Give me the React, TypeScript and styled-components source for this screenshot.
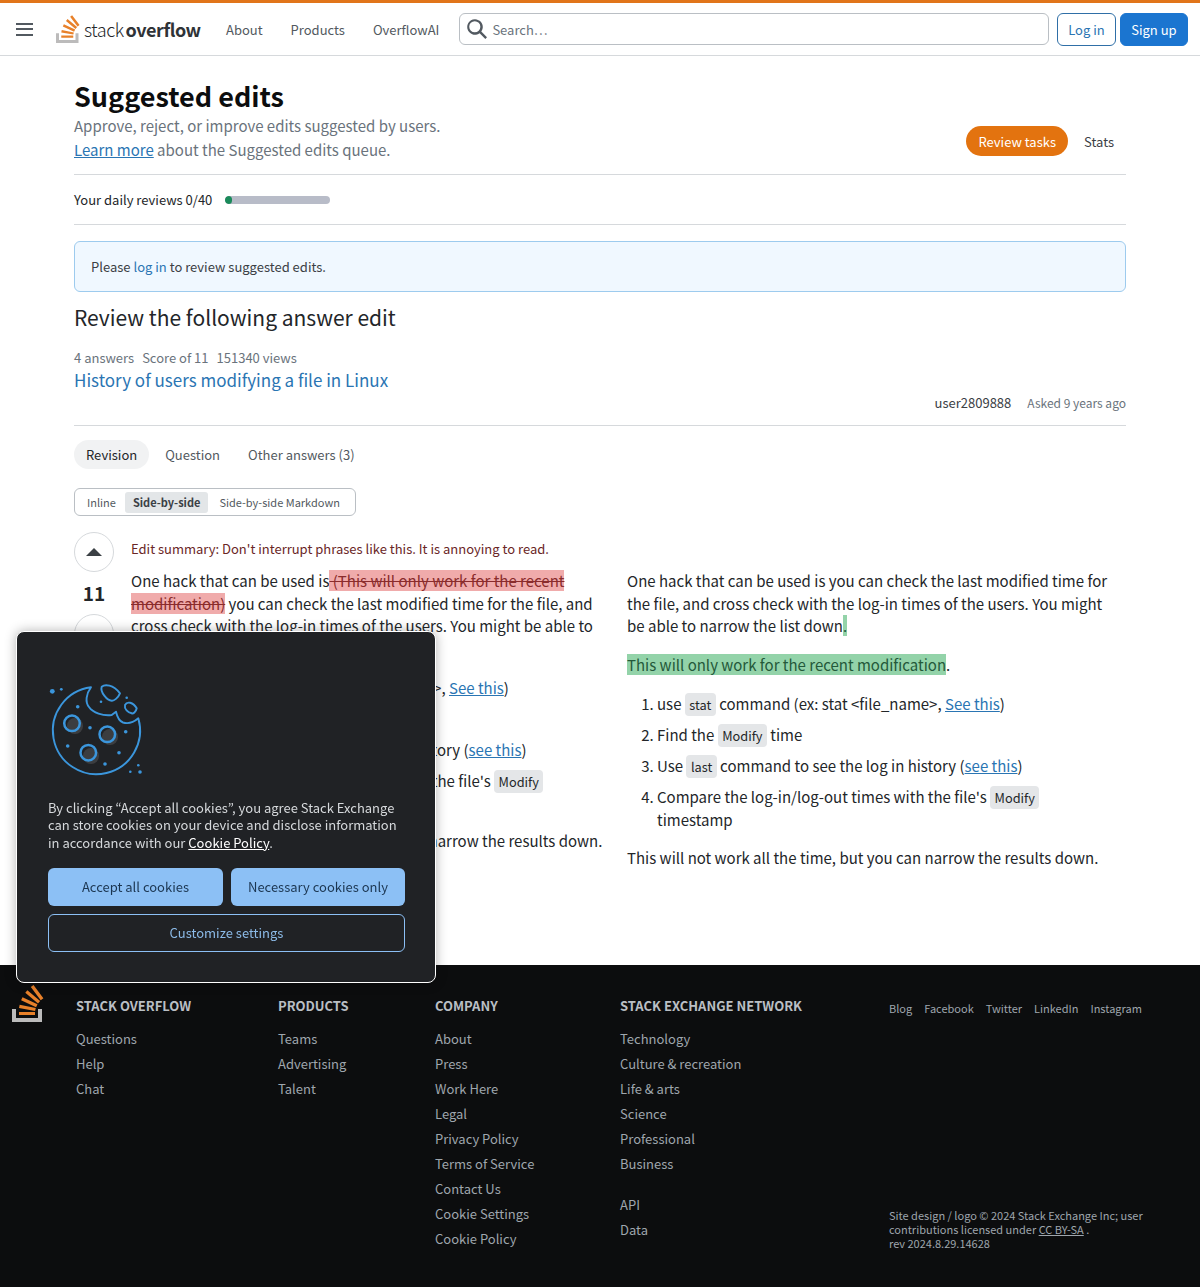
import React from 'react';
import styled, { createGlobalStyle } from 'styled-components';

const GlobalStyle = createGlobalStyle`
  html, body { margin: 0; padding: 0; background: #fff; }
  body {
    font-family: "Noto Sans CJK JP", "Noto Sans", sans-serif;
    color: #232629;
    font-size: 13px;
  }
  * { box-sizing: border-box; }
  svg { flex: none; display: block; }
`;

const SoIcon: React.FC<{ width: number; height: number }> = ({ width, height }) => (
  <svg width={width} height={height} viewBox="0 0 32 37" aria-hidden="true">
    <path d="M26 33v-9h4v13H0V24h4v9h22Z" fill="#bcbbbb" />
    <path
      d="m21.5 0-2.7 2 9.9 13.3 2.7-2L21.5 0ZM26 18.4 13.3 7.8l2.1-2.5 12.7 10.6-2.1 2.5ZM9.1 15.2l15 7 1.4-3-15-7-1.4 3Zm14 10.79.68-2.95-16.1-3.35L7 23l16.1 2.99ZM23 30H7v-3h16v3Z"
      fill="#e8812a"
    />
  </svg>
);

const CookieIcon: React.FC = () => (
  <svg width="100" height="100" viewBox="0 0 100 100" fill="none" aria-hidden="true">
    <g fill="#fff" opacity="0.12">
      <circle cx="27" cy="44" r="8" />
      <circle cx="62" cy="55" r="8" />
      <circle cx="43" cy="74" r="8" />
    </g>
    <g stroke="#3b96dc" strokeWidth="1.9" strokeLinejoin="round">
      <path d="M43 5.3C38 12 37 20 41 25C45 31 55 34 63.7 33L68 29.7C69 34 71 39 75 40.5C80 42 86 40 90.3 36.3A43.6 43.6 0 1 1 43 5.3Z" />
      <path d="M53.7 4.7C57 2 65 2.5 72 11.3C70 16 66 19 63.7 18.7C59 18.5 52 10 53.7 4.7Z" />
      <path d="M77 23C79 19 85 20 88.7 26.3C88 30 85 32 83.7 31.3C80 30.5 76 27 77 23Z" />
      <circle cx="24" cy="41.3" r="7.8" strokeWidth="2.5" />
      <circle cx="59.3" cy="52.3" r="7.8" strokeWidth="2.5" />
      <circle cx="40.3" cy="70.7" r="7.8" strokeWidth="2.5" />
    </g>
    <g fill="#3b96dc">
      <circle cx="4.3" cy="9.3" r="2.4" />
      <circle cx="13.3" cy="7.3" r="1.4" />
      <circle cx="29.7" cy="24.7" r="1.8" />
      <circle cx="42" cy="45.7" r="1.8" />
      <circle cx="77.7" cy="49.7" r="1.8" />
      <circle cx="19.7" cy="64" r="1.8" />
      <circle cx="71" cy="70.7" r="1.8" />
      <circle cx="57" cy="82" r="1.8" />
      <circle cx="78.7" cy="15.7" r="1.3" />
      <circle cx="53" cy="19.7" r="1.3" />
      <circle cx="90.3" cy="83.3" r="1.3" />
      <circle cx="82.3" cy="89.7" r="1.3" />
      <circle cx="92" cy="90" r="1.8" />
    </g>
  </svg>
);

const Header = styled.header`
  height: 56px;
  border-top: 3px solid #e1751a;
  border-bottom: 1px solid #d6d9dc;
  display: flex;
  align-items: center;
  padding: 0 12px 0 16px;
`;

const Burger = styled.span`
  width: 17px;
  height: 13px;
  margin-right: 23px;
  flex: none;
  border-top: 2px solid #525960;
  border-bottom: 2px solid #525960;
  position: relative;
  &::after {
    content: "";
    position: absolute;
    left: 0;
    right: 0;
    top: 3.5px;
    height: 2px;
    background: #525960;
  }
`;

const Logo = styled.a`
  display: flex;
  align-items: flex-end;
  width: 146px;
  margin-right: 24px;
  flex: none;
  gap: 4px;
`;

const Wordmark = styled.div`
  color: #232629;
  font-size: 18px;
  line-height: 24px;
  letter-spacing: -0.45px;
  margin-bottom: 2px;
  white-space: nowrap;
  span { font-weight: 300; }
  b { font-weight: 700; margin-left: 2px; color: #2f3337; }
`;

const Nav = styled.nav`
  display: flex;
  gap: 28px;
  margin-right: 20px;
`;

const NavLink = styled.a`
  color: #525960;
  font-size: 13px;
  white-space: nowrap;
`;

const Search = styled.div`
  flex: 1;
  height: 32px;
  margin-right: 8px;
  border: 1px solid #babfc4;
  border-radius: 6px;
  display: flex;
  align-items: center;
  padding-left: 7px;
  gap: 5px;
  color: #6a737c;
  font-size: 13px;
`;

const HeaderButton = styled.a<{ $primary?: boolean }>`
  height: 33px;
  display: flex;
  align-items: center;
  padding: 0 ${p => (p.$primary ? '10.4px' : '10px')};
  border-radius: 6px;
  font-size: 13px;
  margin-left: ${p => (p.$primary ? '4px' : '0')};
  background: ${p => (p.$primary ? '#1b75d0' : '#fff')};
  color: ${p => (p.$primary ? '#fff' : '#2a75b3')};
  border: 1px solid ${p => (p.$primary ? '#1b75d0' : '#2f6fa7')};
`;

const Main = styled.main`
  width: 1052px;
  margin: 0 auto;
  height: 909px;
`;

const Title = styled.h1`
  margin: 0;
  padding-top: 22px;
  font-size: 27px;
  line-height: 36px;
  font-weight: 700;
  color: #0c0d0e;
`;

const HeadRow = styled.div`
  display: flex;
  justify-content: space-between;
  align-items: flex-start;
  height: 61px;
  border-bottom: 1px solid #d6d9dc;
`;

const Lead = styled.div`
  font-size: 15px;
  line-height: 24px;
  color: #6a737c;
  a { color: #2a75b3; text-decoration: underline; }
`;

const QueueTabs = styled.div`
  display: flex;
  align-items: center;
  margin-top: 12px;
`;

const QueueTab = styled.a<{ $active?: boolean }>`
  height: 30px;
  display: flex;
  align-items: center;
  padding: 0 12px;
  margin-right: ${p => (p.$active ? '4px' : '0')};
  border-radius: 15px;
  font-size: 13px;
  background: ${p => (p.$active ? '#e3730f' : 'transparent')};
  color: ${p => (p.$active ? '#fff' : '#3b4045')};
`;

const DailyRow = styled.div`
  height: 50px;
  display: flex;
  align-items: center;
  gap: 13px;
  font-size: 13px;
  border-bottom: 1px solid #d6d9dc;
`;

const ProgressTrack = styled.div`
  width: 105px;
  height: 8px;
  border-radius: 4px;
  background: #b8bcc8;
  overflow: hidden;
`;

const ProgressFill = styled.div`
  height: 100%;
  border-radius: 4px;
  background: #1a8a5a;
`;

const Notice = styled.div`
  margin-top: 16px;
  height: 51px;
  padding: 0 16px;
  line-height: 50px;
  background: #f0f8ff;
  border: 1px solid #9dcbee;
  border-radius: 6px;
  font-size: 13px;
  color: #3b4045;
  a { color: #2a75b3; }
`;

const ReviewHeading = styled.h2`
  margin: 10px 0 0;
  font-size: 21px;
  line-height: 30px;
  font-weight: 400;
`;

const QuestionStats = styled.div`
  margin-top: 17px;
  font-size: 13px;
  line-height: 18px;
  color: #6a737c;
  display: flex;
  gap: 8px;
`;

const QuestionLink = styled.a`
  display: block;
  font-size: 17px;
  line-height: 26px;
  color: #2a75b3;
`;

const AuthorRow = styled.div`
  display: flex;
  justify-content: flex-end;
  align-items: flex-start;
  gap: 16px;
  height: 33px;
  border-bottom: 1px solid #d6d9dc;
  line-height: 20px;
  font-size: 13px;
  color: #3b4045;
  small { font-size: 12px; color: #6a737c; }
`;

const RevisionTabs = styled.div`
  display: flex;
  margin-top: 14px;
  align-items: center;
`;

const RevisionTab = styled.a<{ $active?: boolean }>`
  height: 29px;
  display: flex;
  align-items: center;
  padding: 0 12px;
  margin-right: 4px;
  border-radius: 15px;
  font-size: 13px;
  background: ${p => (p.$active ? '#f1f2f3' : 'transparent')};
  color: ${p => (p.$active ? '#232629' : '#525960')};
`;

const ViewSwitch = styled.div`
  margin-top: 19px;
  width: 282px;
  height: 28px;
  display: flex;
  align-items: center;
  padding: 0 4px;
  border: 1px solid #babfc4;
  border-radius: 6px;
`;

const ViewOption = styled.a<{ $active?: boolean }>`
  height: 21px;
  display: flex;
  align-items: center;
  padding: 0 8px;
  margin: ${p => (p.$active ? '0 3px 0 1px' : '0')};
  border-radius: 3px;
  font-size: 11px;
  white-space: nowrap;
  font-weight: ${p => (p.$active ? 700 : 400)};
  background: ${p => (p.$active ? '#e3e6e8' : 'transparent')};
  color: ${p => (p.$active ? '#3b4045' : '#525960')};
`;

const DiffGrid = styled.div`
  margin-top: 16px;
  display: grid;
  grid-template-columns: 57px 496px 499px;
`;

const VoteColumn = styled.div`
  display: flex;
  flex-direction: column;
  align-items: center;
  width: 40px;
`;

const VoteCircle = styled.div`
  width: 40px;
  height: 40px;
  border-radius: 50%;
  border: 1px solid #d6d9dc;
  display: flex;
  align-items: center;
  justify-content: center;
`;

const UpArrow = styled.span`
  width: 0;
  height: 0;
  border-left: 8.5px solid transparent;
  border-right: 8.5px solid transparent;
  border-bottom: 8px solid #3b4045;
`;

const VoteCount = styled.div`
  height: 42px;
  font-size: 19px;
  line-height: 42px;
  font-weight: 700;
  color: #232629;
`;

const Summary = styled.div`
  font-size: 13px;
  line-height: 20px;
  margin: 7px 0 11px;
  color: #6a2626;
`;

const DiffColumn = styled.div<{ $pad?: boolean }>`
  font-size: 15px;
  line-height: 22.5px;
  padding-top: ${p => (p.$pad ? '38px' : '0')};
  padding-right: ${p => (p.$pad ? '12px' : '20px')};
  color: #232629;
  a { color: #2a75b3; text-decoration: underline; }
`;

const Para = styled.p`
  margin: 0 0 16.5px;
`;

const Removed = styled.del`
  background: #f0abab;
  color: #8a2c2c;
`;

const Added = styled.span`
  background: #93d3a9;
  color: #24593a;
`;

const Steps = styled.ol`
  margin: 0 0 15.5px;
  padding-left: 30px;
  li { margin-bottom: 8.5px; }
  li:last-child { margin-bottom: 0; }
`;

const Code = styled.code`
  font-family: "Noto Sans CJK JP", sans-serif;
  font-size: 12.75px;
  line-height: 1;
  background: #e4e6e8;
  padding: 2px 4.5px;
  border-radius: 4px;
`;

const Footer = styled.footer`
  height: 322px;
  background: #0c0d0e;
  display: flex;
  padding: 20px 0 0 12px;
`;

const FooterLogo = styled.div`
  width: 64px;
  flex: none;
`;

const FooterCol = styled.div<{ $width: number }>`
  width: ${p => p.$width}px;
  flex: none;
`;

const FooterHead = styled.div`
  font-size: 13px;
  line-height: 18px;
  font-weight: 700;
  color: #babfc4;
  margin-bottom: 11px;
  margin-top: 12px;
  text-transform: uppercase;
`;

const FooterLink = styled.a<{ $gap?: boolean }>`
  display: block;
  font-size: 13px;
  line-height: 25px;
  color: #9fa6ad;
  margin-top: ${p => (p.$gap ? '16px' : '0')};
`;

const FooterAside = styled.div`
  flex: 1;
  display: flex;
  flex-direction: column;
  justify-content: space-between;
  padding: 16px 0 37px;
`;

const Socials = styled.div`
  display: flex;
  gap: 12px;
  font-size: 11px;
  line-height: 14px;
  color: #9fa6ad;
`;

const Copyright = styled.div`
  font-size: 11px;
  line-height: 14px;
  color: #9fa6ad;
  width: 270px;
  a { color: #9fa6ad; text-decoration: underline; }
`;

const CookieDialog = styled.div`
  position: fixed;
  left: 16px;
  top: 631px;
  width: 420px;
  height: 352px;
  padding: 50px 31px 0;
  background: #202225;
  border: 1px solid #fff;
  border-radius: 8px;
  box-shadow: 0 0 12px rgba(0, 0, 0, 0.3);
  color: #d6d9dc;
`;

const CookieArt = styled.div`
  height: 100px;
  margin-bottom: 16.5px;
`;

const CookieText = styled.p`
  margin: 0 0 16.5px;
  font-size: 13px;
  line-height: 17.5px;
  a { color: #fff; text-decoration: underline; }
`;

const CookieActions = styled.div`
  display: grid;
  grid-template-columns: 175px 174px;
  gap: 8px;
`;

const CookieButton = styled.button<{ $outline?: boolean }>`
  height: 38px;
  border-radius: 6px;
  font-family: inherit;
  font-size: 13px;
  grid-column: ${p => (p.$outline ? '1 / 3' : 'auto')};
  background: ${p => (p.$outline ? 'transparent' : '#8cc0f5')};
  color: ${p => (p.$outline ? '#8cbbe8' : '#1b3550')};
  border: ${p => (p.$outline ? '1px solid #8cc0f5' : 'none')};
`;

const footerColumns = [
  { title: 'Stack Overflow', width: 202, links: ['Questions', 'Help', 'Chat'] },
  { title: 'Products', width: 157, links: ['Teams', 'Advertising', 'Talent'] },
  {
    title: 'Company',
    width: 185,
    links: ['About', 'Press', 'Work Here', 'Legal', 'Privacy Policy', 'Terms of Service', 'Contact Us', 'Cookie Settings', 'Cookie Policy'],
  },
];

const networkLinks = ['Technology', 'Culture & recreation', 'Life & arts', 'Science', 'Professional', 'Business'];

export default function App() {
  return (
    <>
      <GlobalStyle />
      <Header>
        <Burger />
        <Logo>
          <SoIcon width={24} height={28} />
          <Wordmark>
            <span>stack</span>
            <b>overflow</b>
          </Wordmark>
        </Logo>
        <Nav>
          <NavLink>About</NavLink>
          <NavLink>Products</NavLink>
          <NavLink>OverflowAI</NavLink>
        </Nav>
        <Search>
          <svg width="20" height="20" viewBox="0 0 18 18" fill="#525960" aria-hidden="true">
            <path d="m18 16.5-5.14-5.14h-.01a7 7 0 1 0-1.5 1.5v.01L16.5 18l1.5-1.5ZM12.01 7a5 5 0 1 1-10 0 5 5 0 0 1 10 0Z" />
          </svg>
          Search…
        </Search>
        <HeaderButton>Log in</HeaderButton>
        <HeaderButton $primary>Sign up</HeaderButton>
      </Header>

      <Main>
        <Title>Suggested edits</Title>
        <HeadRow>
          <Lead>
            Approve, reject, or improve edits suggested by users.
            <br />
            <a>Learn more</a> about the Suggested edits queue.
          </Lead>
          <QueueTabs>
            <QueueTab $active>Review tasks</QueueTab>
            <QueueTab>Stats</QueueTab>
          </QueueTabs>
        </HeadRow>
        <DailyRow>
          Your daily reviews 0/40
          <ProgressTrack>
            <ProgressFill style={{ width: `${(7 / 105) * 100}%` }} />
          </ProgressTrack>
        </DailyRow>
        <Notice>
          Please <a>log in</a> to review suggested edits.
        </Notice>
        <ReviewHeading>Review the following answer edit</ReviewHeading>
        <QuestionStats>
          <span>4 answers</span>
          <span>Score of 11</span>
          <span>151340 views</span>
        </QuestionStats>
        <QuestionLink>History of users modifying a file in Linux</QuestionLink>
        <AuthorRow>
          <span>user2809888</span>
          <small>Asked 9 years ago</small>
        </AuthorRow>
        <RevisionTabs>
          <RevisionTab $active>Revision</RevisionTab>
          <RevisionTab>Question</RevisionTab>
          <RevisionTab>Other answers (3)</RevisionTab>
        </RevisionTabs>
        <ViewSwitch>
          <ViewOption>Inline</ViewOption>
          <ViewOption $active>Side-by-side</ViewOption>
          <ViewOption>Side-by-side Markdown</ViewOption>
        </ViewSwitch>
        <DiffGrid>
          <VoteColumn>
            <VoteCircle>
              <UpArrow />
            </VoteCircle>
            <VoteCount>11</VoteCount>
            <VoteCircle />
          </VoteColumn>
          <DiffColumn>
            <Summary>Edit summary: Don't interrupt phrases like this. It is annoying to read.</Summary>
            <Para>
              One hack that can be used is<Removed> (This will only work for the recent modification)</Removed> you can
              check the last modified time for the file, and cross check with the log-in times of the users. You might be
              able to narrow the list down.
            </Para>
            <Steps>
              <li>
                use <Code>stat</Code> command (ex: stat &lt;file_name&gt;, <a>See this</a>)
              </li>
              <li>
                Find the <Code>Modify</Code> time
              </li>
              <li>
                Use <Code>last</Code> command to see the log in history (<a>see this</a>)
              </li>
              <li>
                Compare the log-in/log-out times with the file's <Code>Modify</Code> timestamp
              </li>
            </Steps>
            <Para>This will not work all the time, but you can narrow the results down.</Para>
          </DiffColumn>
          <DiffColumn $pad>
            <Para>
              One hack that can be used is you can check the last modified time for the file, and cross check with the
              log-in times of the users. You might be able to narrow the list down<Added>.</Added>
            </Para>
            <Para>
              <Added>This will only work for the recent modification</Added>.
            </Para>
            <Steps>
              <li>
                use <Code>stat</Code> command (ex: stat &lt;file_name&gt;, <a>See this</a>)
              </li>
              <li>
                Find the <Code>Modify</Code> time
              </li>
              <li>
                Use <Code>last</Code> command to see the log in history (<a>see this</a>)
              </li>
              <li>
                Compare the log-in/log-out times with the file's <Code>Modify</Code> timestamp
              </li>
            </Steps>
            <Para>This will not work all the time, but you can narrow the results down.</Para>
          </DiffColumn>
        </DiffGrid>
      </Main>

      <Footer>
        <FooterLogo>
          <SoIcon width={32} height={37} />
        </FooterLogo>
        {footerColumns.map(col => (
          <FooterCol key={col.title} $width={col.width}>
            <FooterHead>{col.title}</FooterHead>
            {col.links.map(link => (
              <FooterLink key={link}>{link}</FooterLink>
            ))}
          </FooterCol>
        ))}
        <FooterCol $width={269}>
          <FooterHead>Stack Exchange Network</FooterHead>
          {networkLinks.map(link => (
            <FooterLink key={link}>{link}</FooterLink>
          ))}
          <FooterLink $gap>API</FooterLink>
          <FooterLink>Data</FooterLink>
        </FooterCol>
        <FooterAside>
          <Socials>
            <span>Blog</span>
            <span>Facebook</span>
            <span>Twitter</span>
            <span>LinkedIn</span>
            <span>Instagram</span>
          </Socials>
          <Copyright>
            Site design / logo © 2024 Stack Exchange Inc; user contributions licensed under <a>CC BY-SA</a> .
            <br />
            rev 2024.8.29.14628
          </Copyright>
        </FooterAside>
      </Footer>

      <CookieDialog>
        <CookieArt>
          <CookieIcon />
        </CookieArt>
        <CookieText>
          By clicking “Accept all cookies”, you agree Stack Exchange can store cookies on your device and disclose
          information in accordance with our <a>Cookie Policy</a>.
        </CookieText>
        <CookieActions>
          <CookieButton>Accept all cookies</CookieButton>
          <CookieButton>Necessary cookies only</CookieButton>
          <CookieButton $outline>Customize settings</CookieButton>
        </CookieActions>
      </CookieDialog>
    </>
  );
}
